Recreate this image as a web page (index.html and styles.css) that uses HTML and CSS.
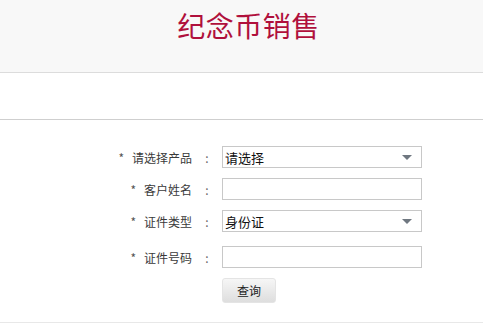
FILE: index.html
```html
<!DOCTYPE html>
<html lang="zh-CN">
<head>
    <meta charset="UTF-8">
    <meta name="viewport" content="width=device-width, initial-scale=1.0">
    <title>纪念币销售</title>
    <link rel="stylesheet" href="styles.css">
</head>
<body>
    <div class="header">
        <h1>纪念币销售</h1>
    </div>
    <div class="sub-bar"></div>

    <form class="query-form">
        <div class="row">
            <label class="label"><span class="star">*</span>请选择产品</label>
            <span class="colon">:</span>
            <div class="select-box">
                <span>请选择</span>
                <i class="arrow"></i>
            </div>
        </div>
        <div class="row">
            <label class="label"><span class="star">*</span>客户姓名</label>
            <span class="colon">:</span>
            <input type="text" class="text-input">
        </div>
        <div class="row row-gap">
            <label class="label"><span class="star">*</span>证件类型</label>
            <span class="colon">:</span>
            <div class="select-box">
                <span>身份证</span>
                <i class="arrow"></i>
            </div>
        </div>
        <div class="row">
            <label class="label"><span class="star">*</span>证件号码</label>
            <span class="colon">:</span>
            <input type="text" class="text-input">
        </div>
        <div class="row">
            <span class="label"></span>
            <span class="colon"></span>
            <button type="button" class="btn">查询</button>
        </div>
    </form>
</body>
</html>
```

FILE: styles.css
```css
body {
    margin: 0;
    background-color: #fff;
    font-family: "Noto Sans CJK SC", "Liberation Sans", sans-serif;
    color: #333;
}
.header {
    height: 72px;
    background-color: #f8f8f8;
    border-bottom: 1px solid #dcdcdc;
    text-align: center;
}
.header h1 {
    margin: 0;
    padding: 6px 0 0 14px;
    font-size: 28px;
    font-weight: normal;
    line-height: 38px;
    color: #b0103c;
    letter-spacing: 0.5px;
}
.sub-bar {
    height: 46px;
    border-bottom: 1px solid #cfcfcf;
}
.query-form {
    padding: 26px 0 19px;
    border-bottom: 1px solid #e8e8e8;
}
.row {
    display: grid;
    grid-template-columns: 192px 30px 200px;
    align-items: center;
    height: 22px;
    margin-bottom: 10px;
}
.row-gap {
    margin-bottom: 14px;
}
.row:last-child {
    height: 25px;
    margin-bottom: 0;
}
.label {
    text-align: right;
    font-size: 12px;
    color: #3a3a3a;
}
.star {
    color: #555;
    margin-right: 8px;
}
.colon {
    text-align: center;
    font-size: 12px;
    color: #666;
}
.select-box, .text-input {
    box-sizing: border-box;
    width: 200px;
    height: 22px;
    border: 1px solid #c8c8c8;
    background: #fff;
    margin: 0;
}
.select-box {
    display: flex;
    align-items: center;
    justify-content: space-between;
    padding: 0 9px 0 2px;
    font-size: 13px;
    color: #111;
}
.arrow {
    width: 0;
    height: 0;
    border-left: 5px solid transparent;
    border-right: 5px solid transparent;
    border-top: 5px solid #6f7780;
}
.btn {
    box-sizing: border-box;
    width: 54px;
    height: 25px;
    padding: 0;
    font-family: inherit;
    font-size: 12px;
    color: #222;
    border: 1px solid #e4e4e4;
    border-radius: 3px;
    background: linear-gradient(#f6f6f6, #dedede);
}
```
